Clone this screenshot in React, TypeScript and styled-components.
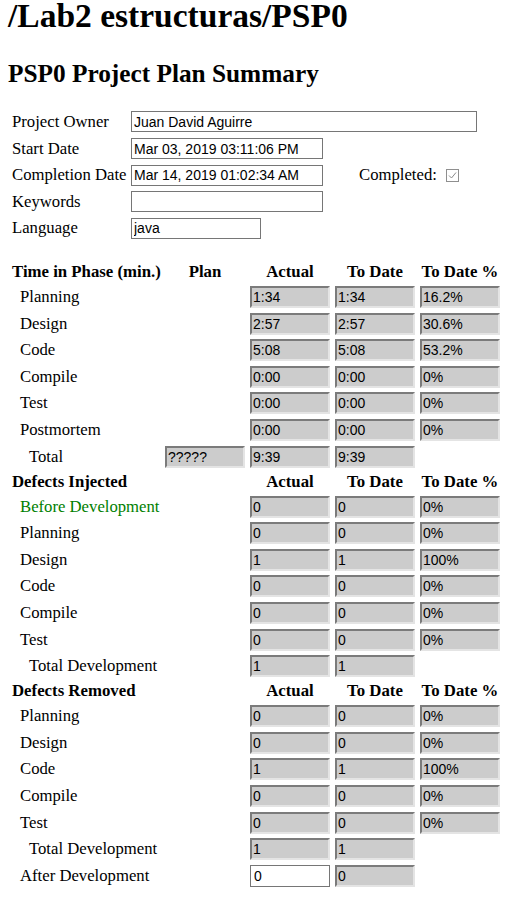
import React from 'react'
import styled, { createGlobalStyle } from 'styled-components'

const GlobalStyle = createGlobalStyle`
  html, body {
    margin: 0;
    background: #fff;
  }
  body {
    padding: 0 8px;
    font-family: "Liberation Serif", "Times New Roman", serif;
    font-size: 16.7px;
    color: #000;
  }
`

const Title = styled.h1`
  font-size: 33.5px;
  font-weight: bold;
  line-height: 31px;
  margin: 0;
`

const Subtitle = styled.h2`
  font-size: 25.3px;
  font-weight: bold;
  line-height: 28px;
  margin: 27.5px 0 0;
`

const InfoForm = styled.div`
  display: grid;
  grid-template-columns: 119px auto;
  grid-auto-rows: 26.6px;
  align-items: center;
  padding-left: 4px;
  margin-top: 22.2px;
`

const InfoLabel = styled.span`
  white-space: nowrap;
`

const InfoCell = styled.div`
  display: flex;
  align-items: center;
`

const TextBox = styled.input<{ $width: number }>`
  box-sizing: border-box;
  width: ${({ $width }) => $width}px;
  height: 21px;
  padding: 1px 2px;
  border: 1px solid #767676;
  background: #fff;
  font-family: "Liberation Sans", Arial, sans-serif;
  font-size: 14px;
  color: #000;
  outline: none;
`

const CompletedLabel = styled.span`
  margin-left: 36px;
  margin-right: 9px;
`

const CheckBox = styled.span`
  box-sizing: border-box;
  display: inline-flex;
  align-items: center;
  justify-content: center;
  width: 13px;
  height: 13px;
  border: 1px solid #8f8f8f;
  background: #fff;
`

const Table = styled.div`
  display: flex;
  flex-direction: column;
  margin-top: 18.5px;
  padding-left: 4px;
`

const Row = styled.div<{ $header?: boolean }>`
  display: grid;
  grid-template-columns: 148px repeat(4, 80px);
  column-gap: 5px;
  align-items: center;
  height: ${({ $header }) => ($header ? '23.5px' : '26.6px')};
  font-weight: ${({ $header }) => ($header ? 'bold' : 'normal')};
  font-size: ${({ $header }) => ($header ? '16.8px' : '16.7px')};
`

const HeadCell = styled.span<{ $left?: boolean }>`
  text-align: ${({ $left }) => ($left ? 'left' : 'center')};
  white-space: nowrap;
`

const RowLabel = styled.span<{ $indent: number; $color?: string }>`
  padding-left: ${({ $indent }) => $indent}px;
  color: ${({ $color }) => $color ?? '#000'};
  white-space: nowrap;
`

const ValueBox = styled.input<{ $editable?: boolean }>`
  box-sizing: border-box;
  width: 80px;
  height: 22px;
  padding: 1px;
  font-family: "Liberation Sans", Arial, sans-serif;
  font-size: 14px;
  color: #000;
  outline: none;
  background: ${({ $editable }) => ($editable ? '#fff' : '#cccccc')};
  border: ${({ $editable }) => ($editable ? '1px solid #767676' : '2px solid')};
  border-color: ${({ $editable }) =>
    $editable ? '#767676' : '#7b7b7b #e4e4e4 #e4e4e4 #7b7b7b'};
  padding-left: ${({ $editable }) => ($editable ? '3px' : '1px')};
`

type DataRow = {
  label: string
  indent?: number
  color?: string
  plan?: string
  actual: string
  toDate: string
  pct?: string
  editable?: boolean
}

type Section = {
  title: string
  plan: boolean
  rows: DataRow[]
}

const sections: Section[] = [
  {
    title: 'Time in Phase (min.)',
    plan: true,
    rows: [
      { label: 'Planning', actual: '1:34', toDate: '1:34', pct: '16.2%' },
      { label: 'Design', actual: '2:57', toDate: '2:57', pct: '30.6%' },
      { label: 'Code', actual: '5:08', toDate: '5:08', pct: '53.2%' },
      { label: 'Compile', actual: '0:00', toDate: '0:00', pct: '0%' },
      { label: 'Test', actual: '0:00', toDate: '0:00', pct: '0%' },
      { label: 'Postmortem', actual: '0:00', toDate: '0:00', pct: '0%' },
      { label: 'Total', indent: 17, plan: '?????', actual: '9:39', toDate: '9:39' }
    ]
  },
  {
    title: 'Defects Injected',
    plan: false,
    rows: [
      { label: 'Before Development', color: '#008000', actual: '0', toDate: '0', pct: '0%' },
      { label: 'Planning', actual: '0', toDate: '0', pct: '0%' },
      { label: 'Design', actual: '1', toDate: '1', pct: '100%' },
      { label: 'Code', actual: '0', toDate: '0', pct: '0%' },
      { label: 'Compile', actual: '0', toDate: '0', pct: '0%' },
      { label: 'Test', actual: '0', toDate: '0', pct: '0%' },
      { label: 'Total Development', indent: 17, actual: '1', toDate: '1' }
    ]
  },
  {
    title: 'Defects Removed',
    plan: false,
    rows: [
      { label: 'Planning', actual: '0', toDate: '0', pct: '0%' },
      { label: 'Design', actual: '0', toDate: '0', pct: '0%' },
      { label: 'Code', actual: '1', toDate: '1', pct: '100%' },
      { label: 'Compile', actual: '0', toDate: '0', pct: '0%' },
      { label: 'Test', actual: '0', toDate: '0', pct: '0%' },
      { label: 'Total Development', indent: 17, actual: '1', toDate: '1' },
      { label: 'After Development', actual: '0', toDate: '0', editable: true }
    ]
  }
]

const Value = ({ value, editable }: { value?: string, editable?: boolean }) =>
  value !== undefined
    ? <ValueBox type='text' readOnly value={value} $editable={editable} />
    : <span />

const App = (): JSX.Element => {
  return (
    <>
      <GlobalStyle />
      <Title>/Lab2 estructuras/PSP0</Title>
      <Subtitle>PSP0 Project Plan Summary</Subtitle>

      <InfoForm>
        <InfoLabel>Project Owner</InfoLabel>
        <InfoCell><TextBox readOnly value='Juan David Aguirre' $width={346} /></InfoCell>
        <InfoLabel>Start Date</InfoLabel>
        <InfoCell><TextBox readOnly value='Mar 03, 2019 03:11:06 PM' $width={192} /></InfoCell>
        <InfoLabel>Completion Date</InfoLabel>
        <InfoCell>
          <TextBox readOnly value='Mar 14, 2019 01:02:34 AM' $width={192} />
          <CompletedLabel>Completed:</CompletedLabel>
          <CheckBox>
            <svg width='9' height='9' viewBox='0 0 9 9'>
              <polyline points='1,4.5 3.5,7 8,1.5' fill='none' stroke='#8a8a8a' strokeWidth='1' />
            </svg>
          </CheckBox>
        </InfoCell>
        <InfoLabel>Keywords</InfoLabel>
        <InfoCell><TextBox readOnly value='' $width={192} /></InfoCell>
        <InfoLabel>Language</InfoLabel>
        <InfoCell><TextBox readOnly value='java' $width={130} /></InfoCell>
      </InfoForm>

      <Table>
        {sections.map((section) => (
          <React.Fragment key={section.title}>
            <Row $header>
              <HeadCell $left>{section.title}</HeadCell>
              <HeadCell>{section.plan ? 'Plan' : ''}</HeadCell>
              <HeadCell>Actual</HeadCell>
              <HeadCell>To Date</HeadCell>
              <HeadCell>To Date %</HeadCell>
            </Row>
            {section.rows.map((row) => (
              <Row key={`${section.title}-${row.label}`}>
                <RowLabel $indent={row.indent ?? 8} $color={row.color}>{row.label}</RowLabel>
                <Value value={row.plan} />
                <Value value={row.actual} editable={row.editable} />
                <Value value={row.toDate} />
                <Value value={row.pct} />
              </Row>
            ))}
          </React.Fragment>
        ))}
      </Table>
    </>
  )
}

export default App
